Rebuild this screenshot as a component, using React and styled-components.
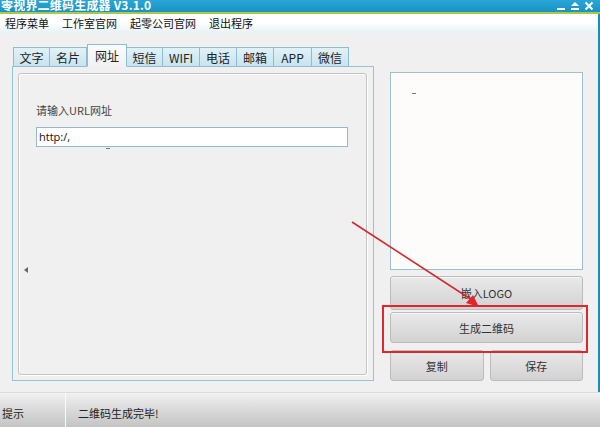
import React from "react";
import styled, { createGlobalStyle } from "styled-components";

const Global = createGlobalStyle`
  html, body { margin: 0; padding: 0; }
  body { width: 600px; height: 427px; overflow: hidden; background: #f0f0f0;
    font-family: "Noto Sans CJK SC", "Liberation Sans", sans-serif; }
  * { box-sizing: border-box; }
`;

const Window = styled.div`
  width: 600px; height: 427px; display: flex; flex-direction: column; overflow: hidden;
`;

const TitleBar = styled.div`
  height: 14px; flex: none; position: relative;
  background: linear-gradient(#2aa6d6, #1992c4);
  border-bottom: 2px solid #a8c94a;
  display: flex; align-items: flex-end; padding-left: 1px;
`;

const Title = styled.div`
  color: #fff; font-weight: bold; font-size: 12px; line-height: 12px;
  margin-bottom: 1px; letter-spacing: 0.2px;
  font-family: "Noto Sans CJK SC", "DejaVu Sans", sans-serif;
`;

const Controls = styled.div`
  position: absolute; right: 6px; top: 1px; display: flex; gap: 4px; align-items: center;
`;

const MenuBar = styled.div`
  height: 19px; flex: none; display: flex; align-items: center; gap: 13px; padding-left: 5px;
  background: linear-gradient(#ffffff 0%, #ffffff 45%, #e6f1f7 100%);
  border-right: 2px solid #1a8fb0;
`;

const MenuItem = styled.span`
  font-size: 11px; color: #111; line-height: 19px;
`;

const Main = styled.div`
  flex: 1; position: relative; display: flex; gap: 16px;
  padding: 11px 0 0 12px; border-right: 2px solid #1a8fb0;
`;

const LeftCol = styled.div`
  width: 362px; display: flex; flex-direction: column;
`;

const TabStrip = styled.div`
  height: 23px; display: flex; align-items: flex-end; padding-left: 1px; margin-bottom: -1px;
  position: relative; z-index: 1;
`;

const Tab = styled.div`
  width: ${(p) => p.$w}px; height: ${(p) => (p.$active ? 23 : 20)}px;
  display: flex; align-items: center; justify-content: center;
  font-size: 12px; color: #222;
  border: 1px solid #8fbdcd; border-left-width: ${(p) => (p.$first || p.$active ? 1 : 0)}px;
  border-bottom: ${(p) => (p.$active ? "1px solid #f2f2f2" : "1px solid #8fbdcd")};
  background: ${(p) =>
    p.$active ? "linear-gradient(#fbfbfb, #f2f2f2)" : "linear-gradient(#e2f1f8, #c8e4ef)"};
  ${(p) => (p.$afterActive ? "border-left-width: 0;" : "")}
`;

const Panel = styled.div`
  height: 315px; border: 1px solid #94c4d4; background: #f0f0f0; padding: 6px 6px 5px 5px;
`;

const Group = styled.div`
  position: relative; height: 100%; border: 1px solid #c4c4c4; border-radius: 3px;
  box-shadow: inset 1px 1px 0 #fff, 1px 1px 0 #fff;
  padding: 28px 18px 0 17px;
`;

const Label = styled.div`
  font-size: 11px; color: #444; line-height: 16px;
`;

const UrlInput = styled.div`
  margin-top: 9px; height: 20px; width: 312px; background: #fff; border: 1px solid #95b9c9;
  font-family: "Open Sans", "Noto Sans CJK SC", sans-serif; font-size: 11px; color: #111;
  padding-left: 2px; line-height: 17px;
`;

const Mark = styled.div`
  position: absolute; width: 4px; height: 1px; background: #777;
  left: ${(p) => p.$x}px; top: ${(p) => p.$y}px;
`;

const ScrollArrow = styled.div`
  position: absolute; left: 5px; top: 193px; width: 0; height: 0;
  border-top: 3px solid transparent; border-bottom: 3px solid transparent;
  border-right: 4px solid #666;
`;

const RightCol = styled.div`
  position: relative; width: 193px; padding-top: 28px; display: flex; flex-direction: column;
`;

const Preview = styled.div`
  position: relative; height: 198px; flex: none; background: #fdfcfb; border: 1px solid #9ebfcb;
`;

const Button = styled.div`
  height: ${(p) => p.$h}px; margin-top: ${(p) => p.$mt}px; flex: ${(p) => (p.$grow ? 1 : "none")};
  display: flex; align-items: center; justify-content: center;
  font-size: 11px; color: #333;
  border: 1px solid #bcbcbc; border-radius: 3px;
  background: linear-gradient(#e9e9e9, #d2d2d2);
  box-shadow: inset 0 1px 0 #f6f6f6;
`;

const ButtonRow = styled.div`
  display: flex; gap: 6px; margin-top: 7px;
`;

const Highlight = styled.div`
  position: absolute; left: -8px; top: 261px; width: 206px; height: 48px;
  border: 2px solid #e0262e; pointer-events: none;
`;

const Arrow = styled.svg`
  position: absolute; left: 0; top: 0; pointer-events: none; overflow: visible;
`;

const StatusBar = styled.div`
  height: 35px; flex: none; display: flex; align-items: center;
  background: linear-gradient(#f2f2f2 0%, #e2e2e2 30%, #c4c4c4 100%);
  border-top: 1px solid #dcdcdc;
`;

const StatusCell = styled.div`
  font-size: 11px; color: #222; height: 100%; display: flex; align-items: center;
  padding-left: ${(p) => p.$pl}px; width: ${(p) => (p.$w ? p.$w + "px" : "auto")};
  border-right: ${(p) => (p.$sep ? "1px solid #fafafa" : "none")};
  padding-top: 6px;
`;

const tabs = [
  ["文字", 37], ["名片", 37], ["网址", 40], ["短信", 36], ["WIFI", 37],
  ["电话", 37], ["邮箱", 37], ["APP", 38], ["微信", 37],
];

export default function App() {
  return (
    <Window>
      <Global />
      <TitleBar>
        <Title>零视界二维码生成器 V3.1.0</Title>
        <Controls>
          <svg width="10" height="10" viewBox="0 0 10 10"><rect x="1" y="7" width="8" height="2" fill="#fff" /></svg>
          <svg width="10" height="10" viewBox="0 0 10 10"><polygon points="5,1 9,5 1,5" fill="#fff" /><rect x="1" y="7" width="8" height="2" fill="#fff" /></svg>
          <svg width="10" height="10" viewBox="0 0 10 10"><path d="M1.5 1.5 L8.5 8.5 M8.5 1.5 L1.5 8.5" stroke="#fff" strokeWidth="2" /></svg>
        </Controls>
      </TitleBar>
      <MenuBar>
        <MenuItem>程序菜单</MenuItem>
        <MenuItem>工作室官网</MenuItem>
        <MenuItem>起零公司官网</MenuItem>
        <MenuItem>退出程序</MenuItem>
      </MenuBar>
      <Main>
        <LeftCol>
          <TabStrip>
            {tabs.map(([t, w], i) => (
              <Tab key={t} $w={w} $first={i === 0} $active={i === 2} $afterActive={i === 3}>{t}</Tab>
            ))}
          </TabStrip>
          <Panel>
            <Group>
              <Label>请输入URL网址</Label>
              <UrlInput>http:/,</UrlInput>
              <Mark $x={87} $y={74} />
              <ScrollArrow />
            </Group>
          </Panel>
        </LeftCol>
        <RightCol>
          <Preview>
            <Mark $x={21} $y={20} />
          </Preview>
          <Button $h={34} $mt={6}>嵌入LOGO</Button>
          <Button $h={31} $mt={2}>生成二维码</Button>
          <ButtonRow>
            <Button $h={31} $mt={0} $grow>复制</Button>
            <Button $h={31} $mt={0} $grow>保存</Button>
          </ButtonRow>
          <Highlight />
        </RightCol>
        <Arrow width="600" height="359" viewBox="0 0 600 359">
          <line x1="352" y1="189" x2="472" y2="267" stroke="#cf2a30" strokeWidth="1.6" />
          <polygon points="479,274 466,270 473,262" fill="#e0262e" />
        </Arrow>
      </Main>
      <StatusBar>
        <StatusCell $pl={2} $w={66} $sep>提示</StatusCell>
        <StatusCell $pl={12}>二维码生成完毕!</StatusCell>
      </StatusBar>
    </Window>
  );
}
